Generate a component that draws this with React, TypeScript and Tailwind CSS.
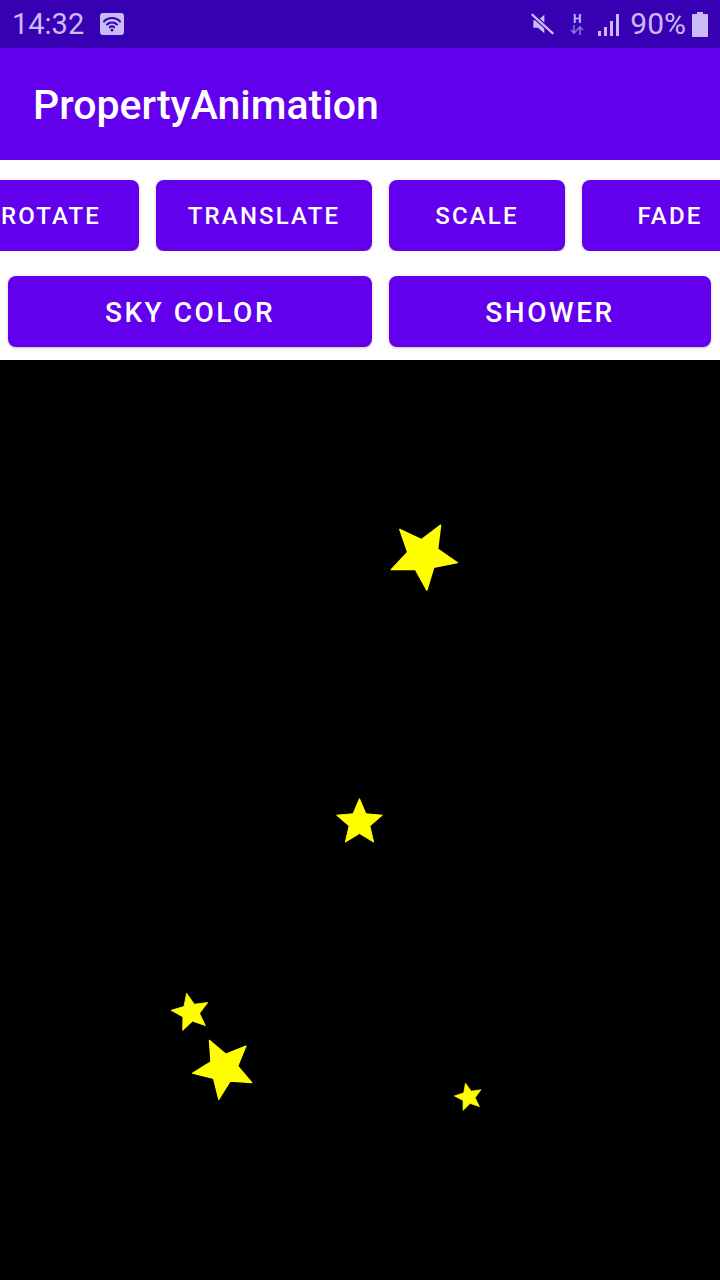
import React from 'react'

const STAR = 'M12 17.27L18.18 21l-1.64-7.03L22 9.24l-7.19-0.61L12 2 9.19 8.63 2 9.24l5.46 4.73L5.82 21z'

type StarProps = { x: number; y: number; size: number; rot: number }

const Star = ({ x, y, size, rot }: StarProps) => (
  <svg
    viewBox="0 0 24 24"
    width={size}
    height={size}
    className="absolute"
    style={{ left: x - size / 2, top: y - size / 2, transform: `rotate(${rot}deg)` }}
  >
    <path d={STAR} fill="#ffff00" stroke="#ffff00" strokeWidth="0.4" strokeLinejoin="round" />
  </svg>
)

const stars: StarProps[] = [
  { x: 424, y: 554, size: 80, rot: 30 },
  { x: 359, y: 821, size: 55, rot: 0 },
  { x: 190, y: 1011, size: 45, rot: -12 },
  { x: 223, y: 1067, size: 72, rot: -27 },
  { x: 468, y: 1096, size: 33, rot: -13 },
]

const StatusBar = () => (
  <div className="h-[48px] bg-[#3700b3] flex items-center pl-[12px] pr-[12px] text-[#c9bbf4] font-['Roboto',sans-serif]">
    <span className="text-[29px] leading-none">14:32</span>
    <svg width="24" height="22" viewBox="0 0 24 22" className="ml-[16px]">
      <rect x="0" y="0" width="24" height="22" rx="3" fill="#c9bbf4" />
      <path d="M4 8.5a11 11 0 0 1 16 0" stroke="#3700b3" strokeWidth="2" fill="none" strokeLinecap="round" />
      <path d="M7 11.5a7 7 0 0 1 10 0" stroke="#3700b3" strokeWidth="2" fill="none" strokeLinecap="round" />
      <path d="M9.8 14.3a3 3 0 0 1 4.4 0" stroke="#3700b3" strokeWidth="2" fill="none" strokeLinecap="round" />
      <circle cx="12" cy="17" r="1.5" fill="#3700b3" />
    </svg>
    <div className="flex-1" />
    <svg width="25" height="22" viewBox="0 0 26 24" className="mr-[15px]">
      <path d="M3 8h5l7-6v20l-7-6H3z" fill="#c9bbf4" />
      <path d="M2 2l22 20" stroke="#3700b3" strokeWidth="5" />
      <path d="M2 2l22 20" stroke="#c9bbf4" strokeWidth="2.5" strokeLinecap="round" />
    </svg>
    <div className="flex flex-col items-center mr-[14px] leading-none">
      <span className="text-[12px] font-bold">H</span>
      <svg width="14" height="10" viewBox="0 0 14 10">
        <path d="M4 0v8M1 5l3 3 3-3" stroke="#8a72d8" strokeWidth="1.6" fill="none" />
        <path d="M10 10V2M7 5l3-3 3 3" stroke="#8a72d8" strokeWidth="1.6" fill="none" />
      </svg>
    </div>
    <svg width="21" height="22" viewBox="0 0 21 22" className="mr-[11px] mt-[1px]">
      <rect x="0" y="17" width="3" height="5" fill="#c9bbf4" />
      <rect x="6" y="13" width="3" height="9" fill="#c9bbf4" />
      <rect x="12" y="7" width="3" height="15" fill="#c9bbf4" />
      <rect x="18" y="0" width="3" height="22" fill="#c9bbf4" />
    </svg>
    <span className="text-[30px] leading-none">90%</span>
    <svg width="16" height="25" viewBox="0 0 16 25" className="ml-[6px]">
      <rect x="5" y="0" width="6" height="3" fill="#c9bbf4" />
      <rect x="0" y="2" width="16" height="23" rx="1" fill="#c9bbf4" />
    </svg>
  </div>
)

const Btn = ({ label, w, big }: { label: string; w: string; big?: boolean }) => (
  <div
    className={`${w} shrink-0 h-[71px] rounded-[8px] bg-[#6200ee] shadow-[0_1px_3px_rgba(0,0,0,0.25)] flex items-center justify-center text-white font-medium uppercase tracking-[0.09em] ${big ? 'text-[28px] pt-[3px]' : 'text-[24px] pt-[1px]'}`}
  >
    {label}
  </div>
)

export default function App() {
  return (
    <div className="w-[720px] h-[1280px] flex flex-col bg-white font-['Roboto',sans-serif] overflow-hidden">
      <StatusBar />
      <div className="h-[112px] bg-[#6200ee] flex items-center px-[33px] pt-[3px]">
        <h1 className="text-white text-[41px] font-medium leading-none">PropertyAnimation</h1>
      </div>

      <div className="overflow-hidden pt-[20px]">
        <div className="flex gap-[17px] ml-[-37px]">
          <Btn label="Rotate" w="w-[176px]" />
          <Btn label="Translate" w="w-[216px]" />
          <Btn label="Scale" w="w-[176px]" />
          <Btn label="Fade" w="w-[176px]" />
        </div>
      </div>
      <div className="flex gap-[17px] pl-[8px] pt-[25px] pb-[13px]">
        <Btn label="Sky Color" w="w-[364px]" big />
        <Btn label="Shower" w="w-[322px]" big />
      </div>

      <div className="relative flex-1 bg-black">
        {stars.map((s, i) => (
          <Star key={i} x={s.x} y={s.y - 360} size={s.size} rot={s.rot} />
        ))}
      </div>
    </div>
  )
}
